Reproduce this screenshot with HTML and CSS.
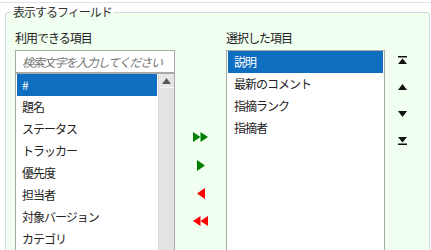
FILE: index.html
```html
<!DOCTYPE html>
<html>
<head>
<meta charset="utf-8">
<link rel="stylesheet" href="styles.css">
</head>
<body>
<div class="topbar"></div>
<fieldset class="fields">
    <legend>表示するフィールド</legend>
    <div class="cols">
        <div class="col">  <!-- 利用できる項目 -->
            <div class="lbl">利用できる項目</div>
            <input class="search" type="text" placeholder="検索文字を入力してください">
            <div class="listbox avail">
                <div class="items">
                    <div class="item sel">#</div>
                    <div class="item">題名</div>
                    <div class="item">ステータス</div>
                    <div class="item">トラッカー</div>
                    <div class="item">優先度</div>
                    <div class="item">担当者</div>
                    <div class="item">対象バージョン</div>
                    <div class="item">カテゴリ</div>
                </div>
                <div class="sbar">
                    <div class="sbtn">
                        <svg width="9" height="6" viewBox="0 0 9 6"><polygon points="0,6 4.5,0 9,6" fill="#5a5a5a"/></svg>
                    </div>
                </div>
            </div>
        </div>
        <div class="moves">  <!-- 移動ボタン -->
            <div class="mv">
                <svg width="15" height="10" viewBox="0 0 15 10"><polygon points="0,0 7.5,5 0,10" fill="#008000"/><polygon points="7.5,0 15,5 7.5,10" fill="#008000"/></svg>
            </div>
            <div class="mv">
                <svg width="8" height="11" viewBox="0 0 8 11"><polygon points="0,0 8,5.5 0,11" fill="#008000"/></svg>
            </div>
            <div class="mv">
                <svg width="8" height="11" viewBox="0 0 8 11"><polygon points="8,0 0,5.5 8,11" fill="#ff0000"/></svg>
            </div>
            <div class="mv">
                <svg width="15" height="10" viewBox="0 0 15 10"><polygon points="7.5,0 0,5 7.5,10" fill="#ff0000"/><polygon points="15,0 7.5,5 15,10" fill="#ff0000"/></svg>
            </div>
        </div>
        <div class="col col2">  <!-- 選択した項目 -->
            <div class="lbl">選択した項目</div>
            <div class="listbox chosen">
                <div class="items">
                    <div class="item sel">説明</div>
                    <div class="item">最新のコメント</div>
                    <div class="item">指摘ランク</div>
                    <div class="item">指摘者</div>
                </div>
            </div>
        </div>
        <div class="orders">  <!-- 並び替え -->
            <div class="od">
                <svg width="9" height="8" viewBox="0 0 9 8"><rect x="0" y="0" width="9" height="1.5" fill="#111"/><polygon points="0,8 4.5,2.5 9,8" fill="#111"/></svg>
            </div>
            <div class="od">
                <svg width="9" height="6" viewBox="0 0 9 6"><polygon points="0,6 4.5,0 9,6" fill="#111"/></svg>
            </div>
            <div class="od">
                <svg width="9" height="6" viewBox="0 0 9 6"><polygon points="0,0 4.5,6 9,0" fill="#111"/></svg>
            </div>
            <div class="od">
                <svg width="9" height="8" viewBox="0 0 9 8"><polygon points="0,0 4.5,5.5 9,0" fill="#111"/><rect x="0" y="6.5" width="9" height="1.5" fill="#111"/></svg>
            </div>
        </div>
    </div>
</fieldset>
</body>
</html>
```

FILE: styles.css
```css
body {
    margin: 0;
    overflow: hidden;
    background: #fff;
    font-family: "Noto Sans CJK JP", "Noto Sans", sans-serif;
    font-size: 12px;
    letter-spacing: -1px;
    color: #222;
}
.topbar {
    height: 2px;
    border-bottom: 1px solid #dde2e8;
}
.fields {
    margin: 1px 0 0 5px;
    width: 400px;
    height: 300px;
    padding: 0 9px;
    border: 1px solid #d3dae2;
    border-radius: 3px;
    background: #f0fff0;
}
.fields legend {
    margin-left: -4px;
    padding: 0 2px;
    line-height: 16px;
    color: #333;
}
.cols {
    display: flex;
    padding-top: 10px;
}
.col {
    width: 160px;
    display: flex;
    flex-direction: column;
}
.col2 {
    width: 159px;
}
.lbl {
    line-height: 16px;
    margin-bottom: 4px;
}
.search {
    box-sizing: border-box;
    width: 160px;
    height: 23px;
    margin: 0;
    padding: 0 2px 0 6px;
    border: 1px solid #a9a9a9;
    font-family: inherit;
    font-size: 12px;
    letter-spacing: -1.2px;
    background: #fff;
}
.search::placeholder {
    color: #757575;
    font-style: italic;
}
.listbox {
    display: flex;
    height: 220px;
    border: 1px solid #a9a9a9;
    background: #fff;
}
.avail {
    padding: 0 0 0 1px;
}
.chosen {
    padding: 0 1px;
}
.items {
    flex: 1;
}
.item {
    height: 22px;
    line-height: 22px;
    padding-left: 5px;
    white-space: nowrap;
}
.chosen .item {
    padding-left: 6px;
}
.sel {
    background: #0f6ebf;
    color: #fff;
}
.sbar {
    width: 15px;
    margin-left: 1px;
    background: #e3e3e3;
    border-left: 1px solid #d8d8d8;
}
.sbtn {
    height: 13px;
    display: flex;
    align-items: center;
    justify-content: center;
    background: #e6e6e6;
    border-bottom: 1px solid #f4f4f4;
}
.moves {
    width: 51px;
    padding-top: 93px;
    display: flex;
    flex-direction: column;
    align-items: center;
}
.mv {
    height: 28px;
    display: flex;
    align-items: center;
    justify-content: center;
}
.orders {
    width: 35px;
    padding-top: 16px;
    display: flex;
    flex-direction: column;
    align-items: center;
}
.od {
    height: 27px;
    display: flex;
    align-items: center;
    justify-content: center;
}
```
